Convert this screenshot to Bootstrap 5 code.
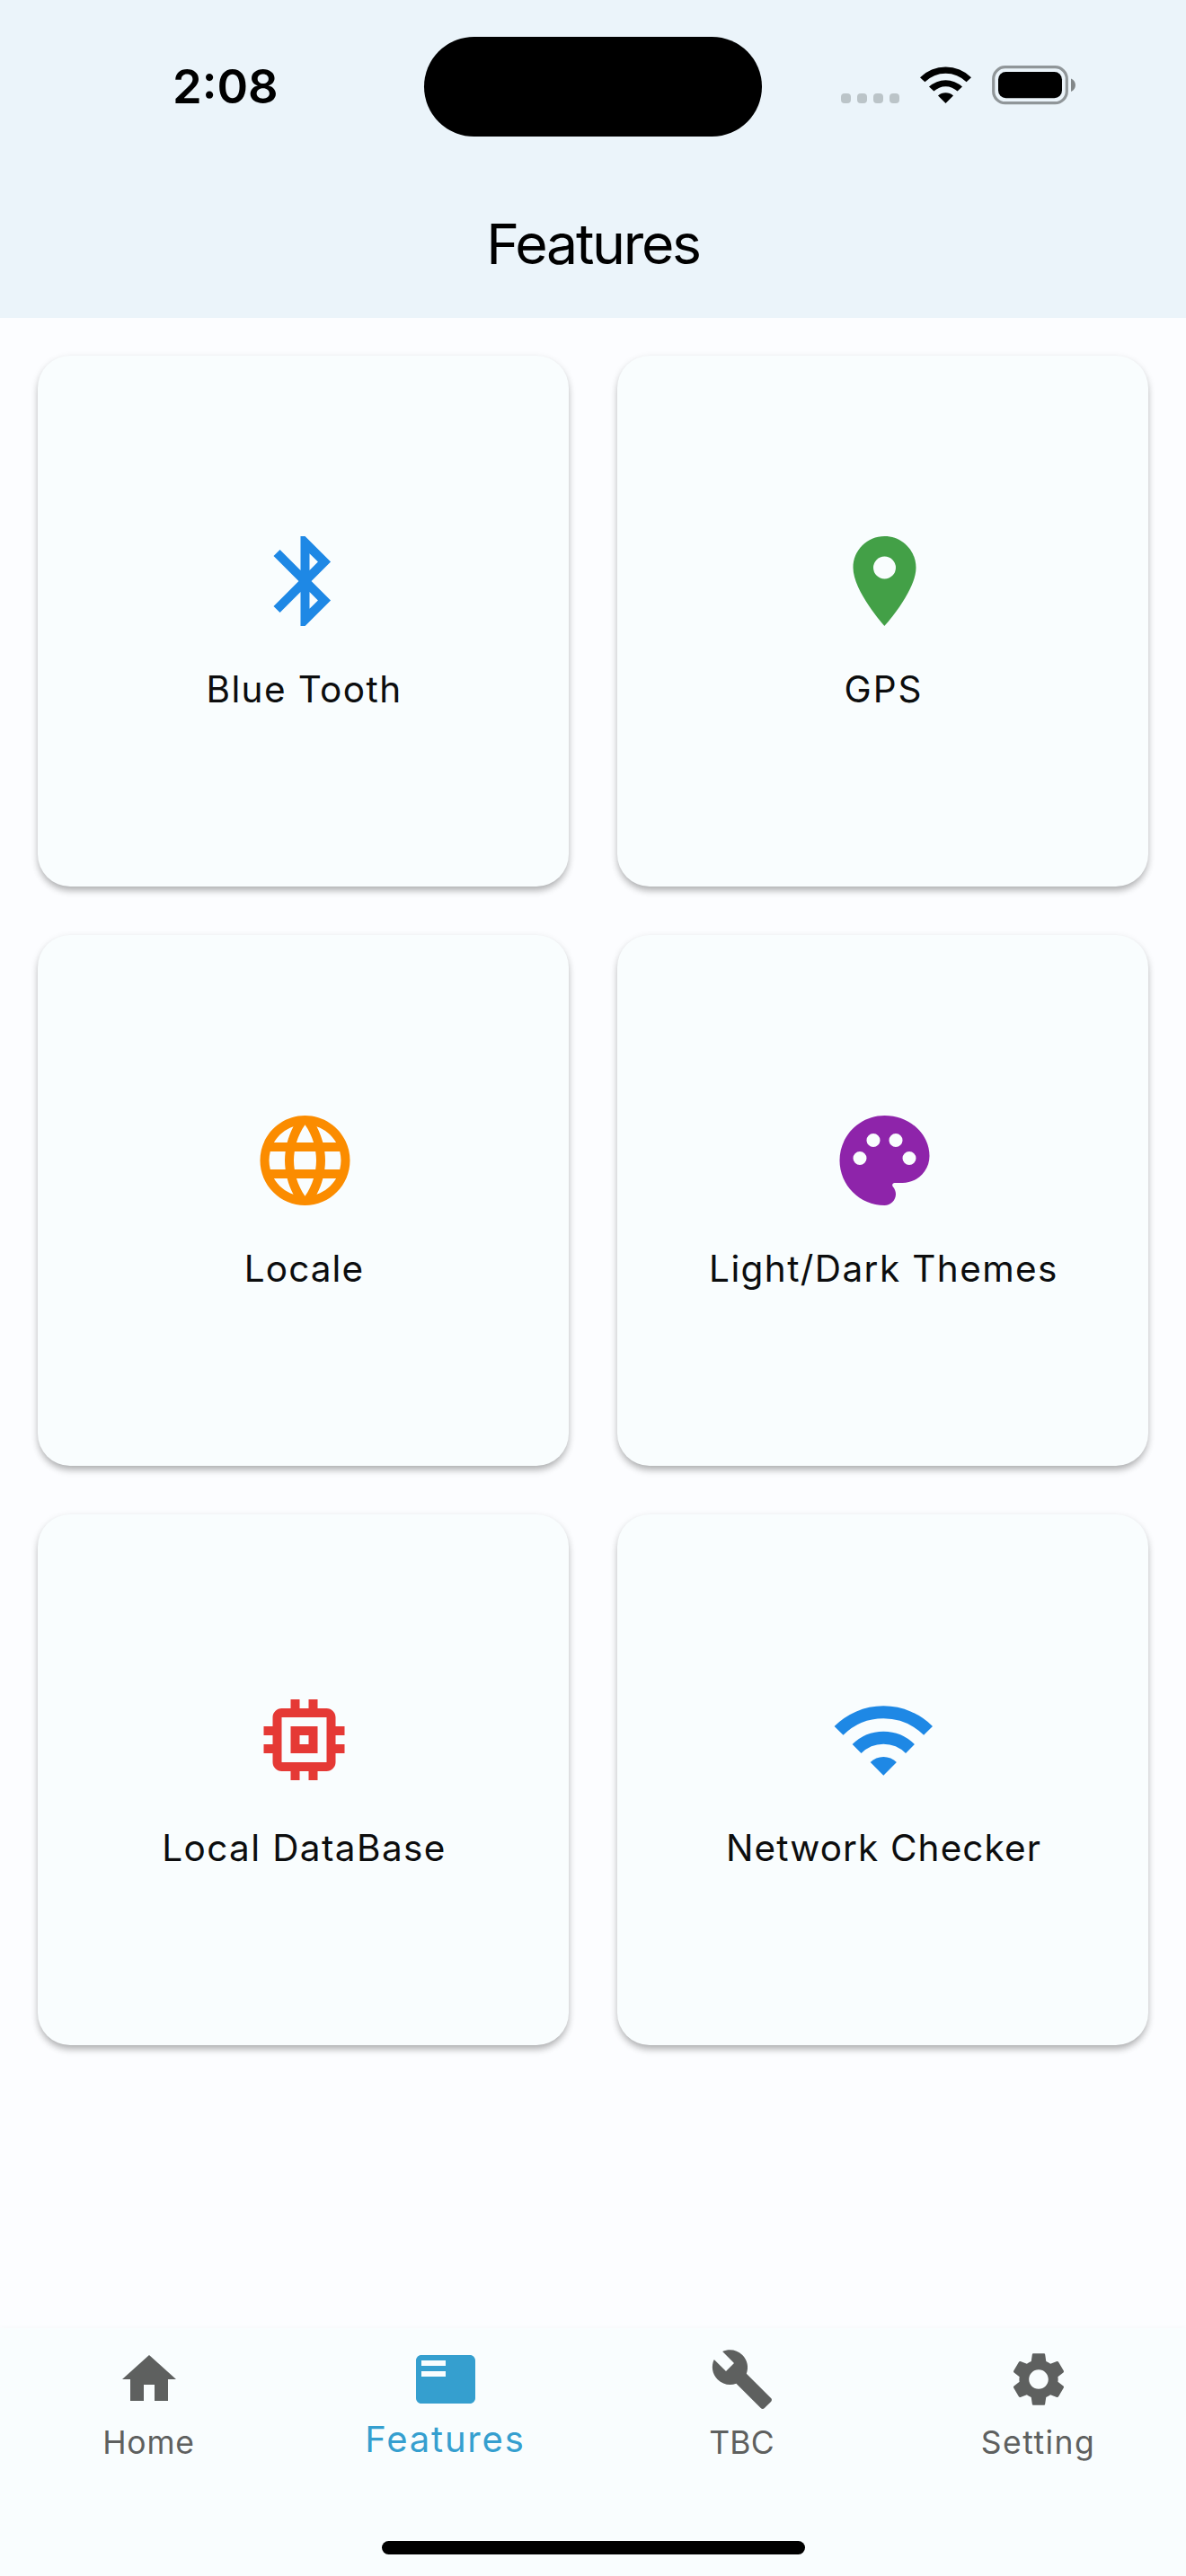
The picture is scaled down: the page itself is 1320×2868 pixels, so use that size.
<!DOCTYPE html>
<html lang="en">
<head>
<meta charset="utf-8">
<meta name="viewport" content="width=device-width, initial-scale=1">
<title>Features</title>
<link rel="stylesheet" href="https://cdn.jsdelivr.net/npm/bootstrap@5.3.0/dist/css/bootstrap.min.css">
<style>
  body { font-family: Inter, "Liberation Sans", sans-serif; background: #fcfdff; color: #0c0d0e; }
  .screen { height: 2868px; }
  svg { display: block; flex: none; }

  .app-header { height: 354px; background: #ebf4fa; color: #000; }
  .status-bar { height: 186px; padding: 41px 122px 0 192px; }
  .clock { font-size: 52.5px; font-weight: 600; line-height: 60px; width: 280px; padding-top: 25px; }
  .island { width: 377px; height: 111px; background: #000; }
  .signal { gap: 7px; margin: 63px 23px 0 88px; }
  .signal span { width: 11px; height: 11px; border-radius: 4px; background: #bbc4c8; }
  .wifi-status { margin: 32px 23px 0 0; }
  .battery { margin-top: 32px; }
  .page-title { height: 168px; padding-top: 1px; font-size: 62.5px; letter-spacing: -2.3px; line-height: 76px; font-weight: 400; }

  .feature-grid { padding: 42px 42px 0; }
  .feature-grid .row { --bs-gutter-x: 54px; --bs-gutter-y: 54px; }
  .feature-card { height: 591px; border: 0; border-radius: 36px; background: #f9fdfe; padding: 191px 0 0 2px;
    box-shadow: 0 6px 9px -2px rgba(0,0,0,.23), 0 3px 9px rgba(0,0,0,.14); }
  .feature-card svg { width: 120px; height: 120px; fill: currentColor; }
  .feature-label { margin-top: 31px; font-size: 40.5px; line-height: 60px; letter-spacing: 1.4px; white-space: nowrap; color: #0c0d0e; }
  .track-wide { letter-spacing: 1.9px; }
  .track-tight { letter-spacing: 1.1px; }
  .c-blue { color: #1e88e5; } .c-green { color: #43a047; } .c-orange { color: #fb8c00; }
  .c-purple { color: #8e24aa; } .c-red { color: #e53935; }

  .tab-bar { height: 276px; background: #f9fdfe; box-shadow: 0 3px 9px 1px rgba(0,0,0,.045); }
  .tab-list { height: 237px; padding-top: 21px; }
  .tab-item { color: #5e605f; font-size: 35.5px; line-height: 60px; letter-spacing: .8px; padding: 0 0 0 1px; }
  .tab-item svg { width: 72px; height: 72px; fill: currentColor; margin-bottom: 5px; }
  .tab-item.active { color: #359fcf; font-size: 40px; letter-spacing: 1.83px; }
  .tab-item.active svg { margin-bottom: 1px; }
  .tab-short { letter-spacing: .18px; }
  .tab-long { letter-spacing: 1.45px; }
  .home-indicator { width: 471px; height: 15px; background: #000; }
</style>
<script src="https://cdn.jsdelivr.net/npm/bootstrap@5.3.0/dist/js/bootstrap.bundle.min.js"></script>
</head>
<body>
<div class="screen d-flex flex-column overflow-hidden">
  <header class="app-header">
    <div class="status-bar d-flex align-items-start">
      <div class="clock">2:08</div>
      <div class="island rounded-pill"></div>
      <div class="signal d-flex"><span></span><span></span><span></span><span></span></div>
      <svg class="wifi-status" width="57" height="42" viewBox="0 0 57 42">
        <path d="M0 13.2A40.5 40.5 0 0 1 57 13.2L51.6 18.2A33 33 0 0 0 5.4 18.2Z"/>
        <path d="M10 23.6A27 27 0 0 1 47 23.6L41.6 28.6A18.8 18.8 0 0 0 15.4 28.6Z"/>
        <path d="M20 33.6A12.6 12.6 0 0 1 37 33.6L28.5 42Z"/>
      </svg>
      <svg class="battery" width="94" height="44" viewBox="0 0 94 44">
        <rect x="1.7" y="1.7" width="81.6" height="40" rx="13" fill="none" stroke="#909699" stroke-width="3.2"/>
        <rect x="7" y="7" width="71" height="29.3" rx="8.5"/>
        <path d="M88 14.5C94.6 17 94.6 26.500 88 29Z" fill="#828789"/>
      </svg>
    </div>
    <h1 class="page-title d-flex align-items-center justify-content-center mb-0">Features</h1>
  </header>

  <main class="feature-grid flex-grow-1">
    <div class="row row-cols-2">
      <div class="col">
        <div class="card feature-card align-items-center">
          <svg class="c-blue" viewBox="-.1 0 24 24"><path d="M17.71 7.71L12 2h-1v7.590L6.410 5 5 6.410 10.590 12 5 17.590 6.410 19 11 14.410V22h1l5.710-5.710-4.300-4.290 4.300-4.290zM13 5.830l1.880 1.880L13 9.590V5.830zm1.880 10.460L13 18.170v-3.760l1.880 1.880z"/></svg>
          <div class="feature-label">Blue Tooth</div>
        </div>
      </div>
      <div class="col">
        <div class="card feature-card align-items-center">
          <svg class="c-green" viewBox="-.1 0 24 24"><path d="M12 2C8.130 2 5 5.130 5 9c0 5.250 7 13 7 13s7-7.750 7-13c0-3.870-3.130-7-7-7zm0 9.500a2.500 2.500 0 0 1 0-5 2.500 2.500 0 0 1 0 5z"/></svg>
          <div class="feature-label track-wide">GPS</div>
        </div>
      </div>
      <div class="col">
        <div class="card feature-card align-items-center">
          <svg class="c-orange" viewBox="-.1 0 24 24"><path d="M11.990 2C6.470 2 2 6.480 2 12s4.470 10 9.990 10C17.520 22 22 17.520 22 12S17.520 2 11.990 2zm6.930 6h-2.950c-.32-1.250-.78-2.450-1.380-3.560 1.840.63 3.370 1.910 4.330 3.560zM12 4.040c.83 1.200 1.480 2.530 1.910 3.960h-3.820c.43-1.430 1.080-2.760 1.910-3.960zM4.260 14C4.100 13.360 4 12.690 4 12s.1-1.360.26-2h3.380c-.08.66-.14 1.320-.14 2 0 .68.06 1.340.14 2H4.260zm.82 2h2.950c.32 1.250.78 2.450 1.380 3.560-1.840-.63-3.370-1.900-4.330-3.560zm2.950-8H5.080c.96-1.660 2.490-2.930 4.330-3.560C8.810 5.550 8.350 6.750 8.030 8zM12 19.960c-.83-1.200-1.480-2.530-1.910-3.960h3.820c-.43 1.430-1.080 2.760-1.910 3.960zM14.340 14H9.660c-.09-.66-.16-1.320-.16-2 0-.68.07-1.350.16-2h4.680c.09.65.16 1.320.16 2 0 .68-.07 1.340-.16 2zm.25 5.560c.6-1.110 1.060-2.310 1.380-3.560h2.950c-.96 1.650-2.490 2.930-4.330 3.560zM16.360 14c.08-.66.14-1.320.14-2 0-.68-.06-1.340-.14-2h3.380c.16.64.26 1.310.26 2s-.1 1.360-.26 2h-3.380z"/></svg>
          <div class="feature-label track-tight">Locale</div>
        </div>
      </div>
      <div class="col">
        <div class="card feature-card align-items-center">
          <svg class="c-purple" viewBox="-.1 0 24 24"><path fill-rule="evenodd" d="M12 2C6.490 2 2 6.490 2 12s4.490 10 10 10c1.380 0 2.500-1.120 2.500-2.500 0-.61-.23-1.200-.64-1.670-.08-.1-.13-.21-.13-.33 0-.28.22-.5.5-.5H16c3.310 0 6-2.690 6-6 0-4.960-4.490-9-10-9zM8 11.500a1.500 1.500 0 1 1-3 0 1.500 1.500 0 0 1 3 0zM11 7.500a1.500 1.500 0 1 1-3 0 1.500 1.500 0 0 1 3 0zM16 7.500a1.500 1.500 0 1 1-3 0 1.500 1.500 0 0 1 3 0zM19 11.500a1.500 1.500 0 1 1-3 0 1.500 1.500 0 0 1 3 0z"/></svg>
          <div class="feature-label">Light/Dark Themes</div>
        </div>
      </div>
      <div class="col">
        <div class="card feature-card align-items-center">
          <svg class="c-red" viewBox=".1 0 24 24"><path d="M15 9H9v6h6V9zm-2 4h-2v-2h2v2zm8-2V9h-2V7c0-1.100-.9-2-2-2h-2V3h-2v2h-2V3H9v2H7c-1.100 0-2 .9-2 2v2H3v2h2v2H3v2h2v2c0 1.100.9 2 2 2h2v2h2v-2h2v2h2v-2h2c1.100 0 2-.9 2-2v-2h2v-2h-2v-2h2zm-4 6H7V7h10v10z"/></svg>
          <div class="feature-label">Local DataBase</div>
        </div>
      </div>
      <div class="col">
        <div class="card feature-card align-items-center">
          <svg class="c-blue" viewBox=".14 0 24 24"><g fill="none" stroke="currentColor" stroke-width="2.800"><path d="M2.050 9.980a14.070 14.070 0 0 1 19.900 0"/><path d="M6.060 13.990a8.400 8.400 0 0 1 11.880 0"/></g><path d="M12 19.930l-2.920-2.920a4.130 4.130 0 0 1 5.840 0z"/></svg>
          <div class="feature-label track-tight">Network Checker</div>
        </div>
      </div>
    </div>
  </main>

  <nav class="tab-bar d-flex flex-column align-items-center">
    <div class="tab-list nav nav-justified w-100 flex-nowrap align-items-start">
      <a class="nav-link tab-item col d-flex flex-column align-items-center"><svg viewBox="0 0 24 24"><path d="M10 20v-6h4v6h5v-8h3L12 3 2 12h3v8z"/></svg>Home</a>
      <a class="nav-link tab-item active col d-flex flex-column align-items-center"><svg viewBox="0 0 24 24"><path d="M21 3H3c-1.100 0-2 .9-2 2v14c0 1.100.9 2 2 2h18c1.100 0 2-.9 2-2V5c0-1.100-.9-2-2-2zm-9 8H3V9h9v2zm0-4H3V5h9v2z"/></svg>Features</a>
      <a class="nav-link tab-item tab-short col d-flex flex-column align-items-center"><svg viewBox="0 0 24 24"><path d="M22.700 19l-9.100-9.100c.9-2.300.4-5-1.500-6.900-2-2-5-2.400-7.400-1.300L9 6 6 9 1.600 4.700C.4 7.100.9 10.100 2.900 12.100c1.900 1.900 4.600 2.400 6.900 1.500l9.100 9.100c.4.4 1 .4 1.400 0l2.300-2.300c.5-.4.5-1.100.1-1.400z"/></svg>TBC</a>
      <a class="nav-link tab-item tab-long col d-flex flex-column align-items-center"><svg viewBox="0 0 24 24"><path d="M19.140 12.940c.04-.3.06-.61.06-.94 0-.32-.02-.64-.07-.94l2.030-1.580c.18-.14.23-.41.12-.61l-1.920-3.320c-.12-.22-.37-.29-.59-.22l-2.390.96c-.5-.38-1.030-.7-1.620-.94l-.36-2.540c-.04-.24-.24-.41-.48-.41h-3.840c-.24 0-.43.17-.47.41l-.36 2.540c-.59.24-1.130.57-1.620.94l-2.390-.96c-.22-.08-.47 0-.59.22L2.740 8.870c-.12.21-.08.47.12.61l2.030 1.580c-.05.3-.09.63-.09.94s.02.64.07.94l-2.030 1.580c-.18.14-.23.41-.12.61l1.920 3.320c.12.22.37.29.59.22l2.390-.96c.5.38 1.030.7 1.620.94l.36 2.540c.05.24.24.41.48.41h3.840c.24 0 .44-.17.47-.41l.36-2.540c.59-.24 1.130-.56 1.620-.94l2.390.96c.22.08.47 0 .59-.22l1.920-3.320c.12-.22.07-.47-.12-.61l-2.010-1.580zM12 15.600c-1.980 0-3.600-1.620-3.600-3.600s1.620-3.600 3.600-3.600 3.600 1.620 3.600 3.600-1.620 3.600-3.600 3.600z"/></svg>Setting</a>
    </div>
    <div class="home-indicator rounded-pill"></div>
  </nav>
</div>
</body>
</html>
